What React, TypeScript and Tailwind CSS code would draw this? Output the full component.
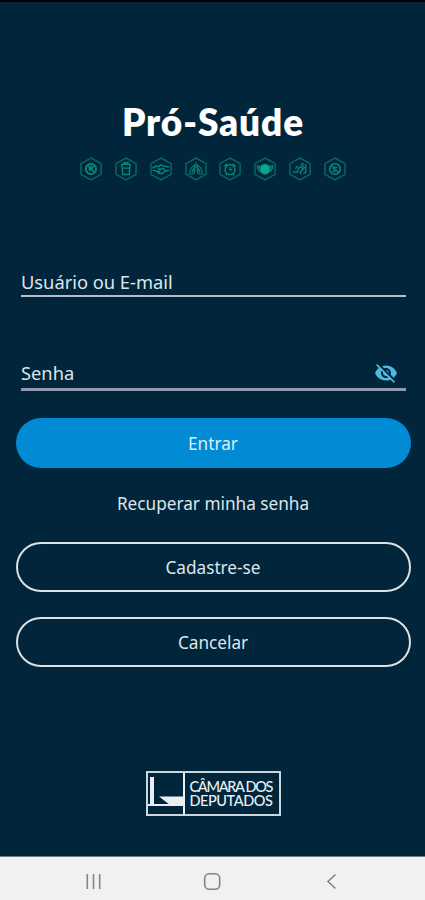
import type { ReactNode } from "react";
import { MdVisibilityOff } from "react-icons/md";

const SANS = "font-['Noto_Sans','Open_Sans',sans-serif]";

const habits: { id: string; art: ReactNode }[] = [
  {
    id: "no-smoking",
    art: (
      <>
        <circle cx="12" cy="13" r="5.6" strokeWidth="2" />
        <path d="M8.3 9.2l7.6 7.6M12 9v5M15 9.5l-2 3M9.5 12.5l2 2.5" strokeWidth="1.6" />
      </>
    ),
  },
  {
    id: "water",
    art: <path d="M6.5 8h11M7.6 8l.8 11h7.2l.8-11M8.3 12h7.4M9 6.2h6" strokeWidth="1.5" />,
  },
  {
    id: "handshake",
    art: (
      <path
        d="M2.5 12l4-2 3 .3L12 8.5l3.5 1.3 5.5 1M3 14.5l4 .5 3 2.7 2.5.4 3-2 5-2M8.5 12.5l3 1.2 2-1.7 3.5 2.7M8.5 15l3 1.3"
        strokeWidth="1.5"
      />
    ),
  },
  {
    id: "lungs",
    art: (
      <>
        <path d="M12 5.5V12M10.5 8.5c-3.4 2.5-5.6 6.2-5.4 10 2.2.6 5.2-.5 5.5-2.3zM13.5 8.5c3.4 2.5 5.6 6.2 5.4 10-2.2.6-5.2-.5-5.5-2.3z" />
        <path d="M10 12l-2.4 4.5M14 12l2.4 4.5" strokeWidth="1.6" />
      </>
    ),
  },
  {
    id: "alarm",
    art: (
      <>
        <circle cx="12" cy="13.8" r="5.4" strokeWidth="1.5" />
        <path d="M12 10.8v3h2.4M5.8 10L9 7.2M18.2 10L15 7.2M8.3 18.5l-1.1 1.3M15.7 18.5l1.1 1.3" strokeWidth="1.4" />
      </>
    ),
  },
  {
    id: "meal",
    art: (
      <>
        <circle cx="12" cy="13.2" r="5.4" fill="#08a88c" />
        <path d="M3.8 9v3.2l1.8 1.5V16M20.2 9v3.2l-1.8 1.5V16M5.8 9v3M18.2 9v3" strokeWidth="1.5" />
      </>
    ),
  },
  {
    id: "exercise",
    art: (
      <>
        <circle cx="14.7" cy="8.5" r="1.5" />
        <path
          d="M4 16.5h5l1.8-5 3.2-.8 1.2 3.2-3 2 1 3M14.7 12.5l4-1.8M9.5 9.5l-2.5 3M18.2 8v8.5l-2.5 1.5"
          strokeWidth="1.4"
        />
      </>
    ),
  },
  {
    id: "no-alcohol",
    art: (
      <>
        <circle cx="12" cy="13" r="5.8" strokeWidth="1.7" />
        <path d="M8 9l8 8M10 13.5c.5-2 2-3 4.5-2M9.5 15.5h3" strokeWidth="1.5" />
      </>
    ),
  },
];

function HabitIcons() {
  return (
    <div className="flex justify-between mt-[12px] w-[266px]">
      {habits.map(({ id, art }) => (
        <svg key={id} viewBox="0 0 24 26" className="w-[22px] h-6" fill="none" stroke="#078a7b" strokeWidth="1.1">
          <path d="M12 1l11 6.2v11.6L12 25 1 18.8V7.2z" stroke="#05695f" strokeWidth="1.6" />
          {art}
        </svg>
      ))}
    </div>
  );
}

function CamaraLogo() {
  return (
    <div className="flex w-[135px] h-[45px] border-2 border-[#ccd6dd] text-[#e9eff2]">
      <svg viewBox="0 0 37 41" className="w-[37px] h-[41px] shrink-0" fill="currentColor">
        <path d="M2 4h4v28H2zM0 31h36v2H0zM11 23.5h25V32H22z" />
        <path d="M35 0h2v41h-2z" />
      </svg>
      <div className="flex flex-col justify-center pl-[5px] font-['Lato',sans-serif] font-medium text-[14.5px] whitespace-nowrap">
        <span className="h-[14px] leading-[14px] tracking-[-1.3px]">CÂMARA DOS</span>
        <span className="h-[14px] leading-[14px] tracking-[-0.45px]">DEPUTADOS</span>
      </div>
    </div>
  );
}

function OutlineButton({ children }: { children: ReactNode }) {
  return (
    <button className="w-full h-[50px] pt-px rounded-full border-2 border-[#dce1e1] text-[#dce5e9] text-[17.2px]">
      {children}
    </button>
  );
}

export default function App() {
  return (
    <div className={`${SANS} flex flex-col w-full h-[900px] bg-[#01263b] border-t-2 border-black overflow-hidden`}>
      <main className="flex-1 flex flex-col items-center pl-px">
        <h1 className="mt-[97px] h-[46px] leading-[46px] font-['Lato',sans-serif] font-extrabold text-[37px] tracking-[0.9px] text-white">
          Pró-Saúde
        </h1>
        <HabitIcons />

        <form className="w-full px-[14.5px] mt-[85px] flex flex-col">
          <div className="mx-[5px] pl-[0.5px] h-[31px] flex items-end border-b-2 border-[#b8bdc9] text-[18.3px] leading-[26px] text-[#dce5e9]">
            Usuário ou E-mail
          </div>
          <div className="mx-[5px] pl-[0.5px] mt-[61px] h-[33px] flex items-end justify-between pr-2 border-b-3 border-[#9298ad] text-[18.3px] leading-[31px] text-[#dce5e9]">
            Senha
            <MdVisibilityOff size={24} color="#50b7df" className="mb-[3px]" />
          </div>
          <button
            type="button"
            className="mt-[27px] w-full h-[50px] pt-px rounded-full bg-[#008bd4] text-[17.2px] text-[#dceef7]"
          >
            Entrar
          </button>
          <a className="mt-[21px] h-[30px] leading-[30px] text-center text-[17.2px] text-[#dce5e9]">
            Recuperar minha senha
          </a>
          <div className="mt-[23px] flex flex-col gap-[25px]">
            <OutlineButton>Cadastre-se</OutlineButton>
            <OutlineButton>Cancelar</OutlineButton>
          </div>
        </form>

        <div className="mt-[104px]">
          <CamaraLogo />
        </div>
      </main>

      <nav className="h-[44px] shrink-0 bg-[#f1f1f1] border-t border-[#717981] flex items-center justify-center">
        <svg viewBox="0 0 425 43" className="w-full h-[43px]" fill="none" stroke="#858585" strokeWidth="1.6">
          <path d="M87.3 17v15M93.5 17v15M99.7 17v15" />
          <rect x="204.7" y="16.7" width="15" height="15.5" rx="4.5" />
          <path d="M335.5 17.5l-7.5 7 7.5 7" />
        </svg>
      </nav>
    </div>
  );
}
